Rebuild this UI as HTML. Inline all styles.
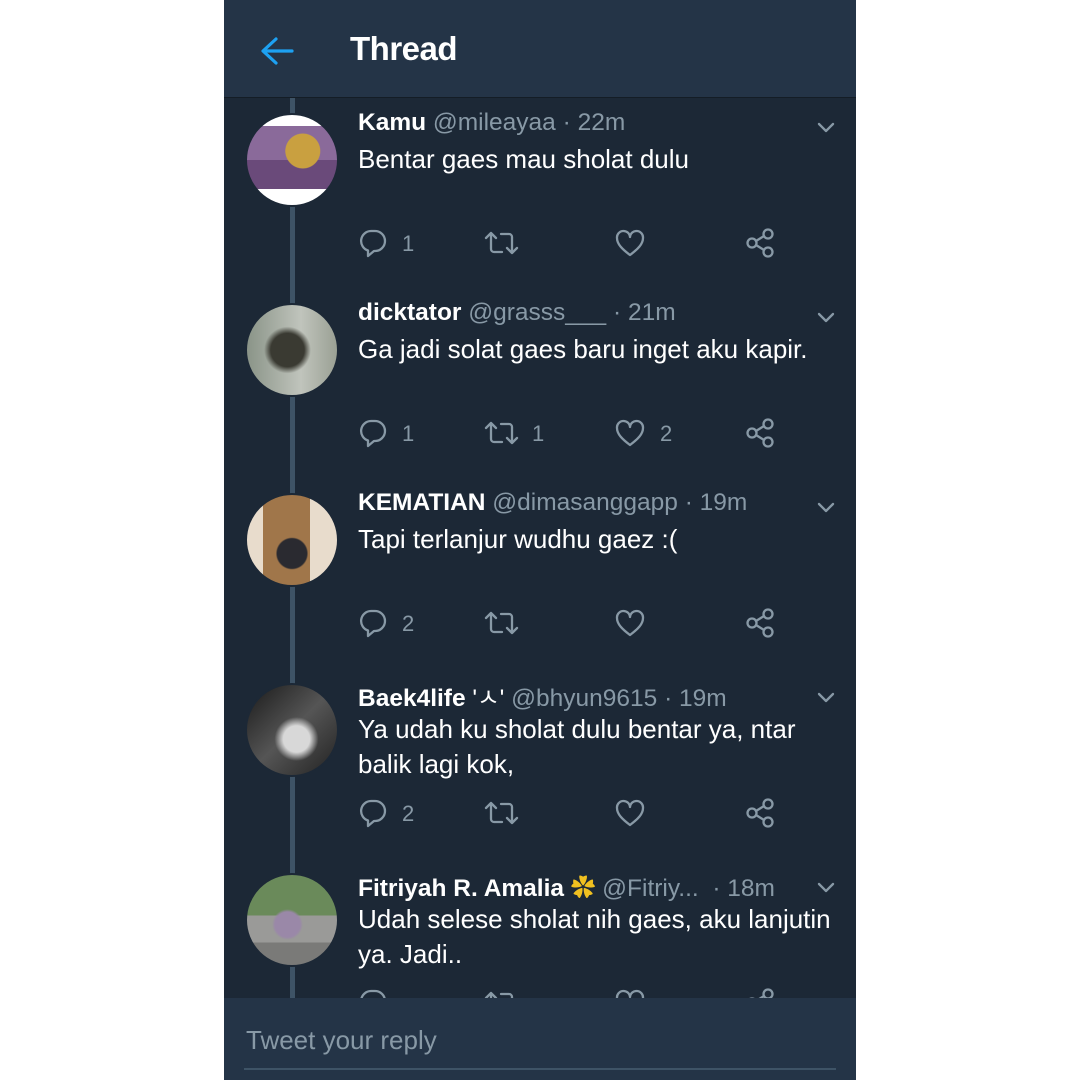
<!DOCTYPE html>
<html><head><meta charset="utf-8"><style>
*{margin:0;padding:0;box-sizing:border-box}
body{width:1080px;height:1080px;background:#fff;position:relative;overflow:hidden;font-family:"Liberation Sans","Noto Sans CJK KR",sans-serif}
#app{position:absolute;left:224px;top:0;width:632px;height:1080px;background:#1c2836;overflow:hidden}
.hdr{position:absolute;left:0;top:0;width:632px;height:98px;background:#243447;border-bottom:1px solid #141d26}
.hdr .t{position:absolute;left:126px;top:30px;color:#fff;font-size:33px;font-weight:bold;letter-spacing:-0.5px}
.line{position:absolute;left:66px;width:5px;background:#3e5366}
.tw{position:absolute;left:0;width:632px;height:190px}
.av{position:absolute;left:21px;top:13px;width:94px;height:94px;border-radius:50%;border:2px solid #1c2836}
.nm{position:absolute;left:134px;top:9px;font-size:24.5px;color:#8899a6;white-space:nowrap}
.nm b{color:#fff}
.tx{position:absolute;left:134px;top:42px;font-size:26px;line-height:35px;color:#fff;width:490px}
.chev{position:absolute;left:592px;top:20px}
.act{position:absolute;left:134px;top:128px;width:480px;height:30px}
.act svg{position:absolute;top:0}
.act span{position:absolute;top:3px;font-size:22px;color:#8899a6}
.ftr{position:absolute;left:0;top:998px;width:632px;height:82px;background:#243447}
.ftr .p{position:absolute;left:22px;top:27px;font-size:26px;color:#8899a6}
.ftr .u{position:absolute;left:20px;top:70px;width:592px;height:2px;background:#3e5366}
</style></head><body>
<div id="app">
<div class="line" style="top:98px;height:900px"></div>

<div class="tw" style="top:100px">
 <div class="av" style="background:radial-gradient(circle at 62% 40%,#c9a040 0 22%,transparent 23%),linear-gradient(180deg,#fff 0 12%,#8a6a9a 12% 50%,#6a4a7a 50% 82%,#fff 82%)"></div>
 <div class="nm"><b>Kamu</b> @mileayaa · 22m</div>
 <div class="tx">Bentar gaes mau sholat dulu</div>
</div>
<div class="tw" style="top:290px">
 <div class="av" style="background:radial-gradient(circle at 45% 50%,#3a3a32 0 25%,transparent 35%),linear-gradient(90deg,#8a9488,#c0c4bc 60%,#9aa094)"></div>
 <div class="nm"><b>dicktator</b> @grasss___ · 21m</div>
 <div class="tx">Ga jadi solat gaes baru inget aku kapir.</div>
</div>
<div class="tw" style="top:480px">
 <div class="av" style="background:radial-gradient(circle at 50% 65%,#2a2a30 0 20%,transparent 22%),linear-gradient(90deg,#e8dccc 0 18%,#a0764a 18% 70%,#e8dccc 70%)"></div>
 <div class="nm"><b>KEMATIAN</b> @dimasanggapp · 19m</div>
 <div class="tx">Tapi terlanjur wudhu gaez :(</div>
</div>
<div class="tw" style="top:670px">
 <div class="av" style="background:radial-gradient(circle at 55% 60%,#d8d8d8 0 18%,transparent 30%),linear-gradient(135deg,#1a1a1a,#555 50%,#222)"></div>
 <div class="nm"><b>Baek4life</b> <span style="color:#fff">'ㅅ'</span> @bhyun9615 · 19m</div>
 <div class="tx">Ya udah ku sholat dulu bentar ya, ntar<br>balik lagi kok,</div>
</div>
<div class="tw" style="top:860px">
 <div class="av" style="background:radial-gradient(circle at 45% 55%,#9a88a8 0 18%,transparent 22%),linear-gradient(180deg,#6a8a5a 0 45%,#9a9a98 45% 75%,#7a7a78 75%)"></div>
 <div class="nm"><b>Fitriyah R. Amalia</b> <span style="color:#f0c020">✿</span> @Fitriy...&nbsp; · 18m</div>
 <div class="tx">Udah selese sholat nih gaes, aku lanjutin<br>ya. Jadi..</div>
</div>

<div class="hdr">
 <svg style="position:absolute;left:36px;top:36px" width="34" height="30" viewBox="0 0 34 30"><path d="M32 15H4M16 3L3 15l13 12" fill="none" stroke="#1da1f2" stroke-width="3.2" stroke-linecap="round" stroke-linejoin="round"/></svg>
 <div class="t">Thread</div>
</div>
<div class="ftr"><div class="p">Tweet your reply</div><div class="u"></div></div>
</div>

<script>
var rows=[[100,"1","",""],[290,"1","1","2"],[480,"2","",""],[670,"2","",""],[860,"","",""]];
var S='fill="none" stroke="#8899a6" stroke-width="2.3" stroke-linecap="round" stroke-linejoin="round"';
rows.forEach(function(r){
 var d=document.createElement('div');d.className='tw';d.style.top=r[0]+'px';
 d.innerHTML='<svg class="chev" width="20" height="14" viewBox="0 0 20 14"><path d="M3 4l7 7 7-7" '+S+'/></svg>'+
 '<div class="act">'+
 '<svg style="left:0" width="30" height="30" viewBox="0 0 30 30"><path d="M13 3h4a10 10 0 0 1 0 20h-1l-6 5v-5.5A10 10 0 0 1 13 3z" '+S+'/></svg>'+
 (r[1]?'<span style="left:44px">'+r[1]+'</span>':'')+
 '<svg style="left:126px" width="36" height="30" viewBox="0 0 36 30"><path d="M7 5L2 10M7 5l5 5M7 5v16a3 3 0 0 0 3 3h8M28 25l-5-5M28 25l5-5M28 25V9a3 3 0 0 0-3-3h-8" '+S+'/></svg>'+
 (r[2]?'<span style="left:174px">'+r[2]+'</span>':'')+
 '<svg style="left:256px" width="32" height="30" viewBox="0 0 32 30"><path d="M16 27C8 21 3 16 3 10a6.5 6.5 0 0 1 13-1 6.5 6.5 0 0 1 13 1c0 6-5 11-13 17z" '+S+'/></svg>'+
 (r[3]?'<span style="left:302px">'+r[3]+'</span>':'')+
 '<svg style="left:386px" width="32" height="30" viewBox="0 0 32 30"><circle cx="8" cy="15" r="4.5" '+S+'/><circle cx="24" cy="6" r="4.5" '+S+'/><circle cx="24" cy="24" r="4.5" '+S+'/><path d="M12 13l8-5M12 17l8 5" '+S+'/></svg>'+
 '</div>';
 document.getElementById('app').insertBefore(d,document.querySelector('.hdr'));
});
</script>
</body></html>
